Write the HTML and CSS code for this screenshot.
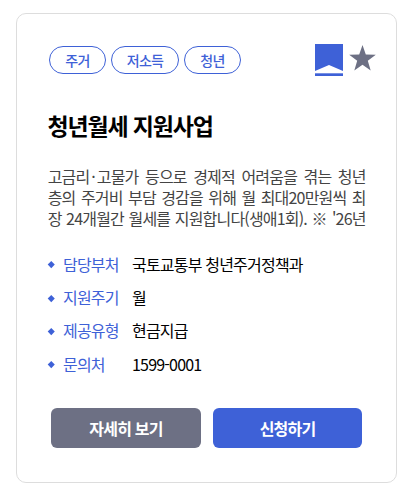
FILE: index.html
```html
<!DOCTYPE html>
<html lang="ko">
<head>
<meta charset="utf-8">
<title>청년월세 지원사업</title>
<link rel="stylesheet" href="styles.css">
</head>
<body>
<article class="card">
  <header class="card-top">
    <ul class="tags">
      <li class="tag">주거</li>
      <li class="tag tag-wide">저소득</li>
      <li class="tag">청년</li>
    </ul>
    <div class="icons">
      <svg class="bookmark" width="28" height="32" viewBox="0 0 28 32" aria-hidden="true"><path fill="#3e61d7" d="M0 0H28V27L14 21L0 27Z"/><path fill="#3e61d7" d="M0 29.3H28V32H0Z"/></svg>
      <svg class="star" width="27" height="26" viewBox="0 0 27 26" aria-hidden="true"><path fill="#6d7084" d="M13.5 0L16.8 9.5L26.8 9.7L18.8 15.8L21.7 25.4L13.5 19.7L5.3 25.4L8.2 15.8L.2 9.7L10.2 9.5Z"/></svg>
    </div>
  </header>
  <h2 class="title">청년월세 지원사업</h2>
  <p class="desc"><span class="line">고금리<span class="dot">·</span>고물가 등으로 경제적 어려움을 겪는 청년</span><span class="line">층의 주거비 부담 경감을 위해 월 최대20만원씩 최</span><span class="line">장 24개월간 월세를 지원합니다(생애1회). ※ '26년</span></p>
  <dl class="info">
    <div class="row"><dt>담당부처</dt><dd>국토교통부 청년주거정책과</dd></div>
    <div class="row"><dt>지원주기</dt><dd>월</dd></div>
    <div class="row"><dt>제공유형</dt><dd>현금지급</dd></div>
    <div class="row"><dt>문의처</dt><dd>1599-0001</dd></div>
  </dl>
  <div class="actions">
    <button class="btn detail" type="button">자세히 보기</button>
    <button class="btn apply" type="button">신청하기</button>
  </div>
</article>
</body>
</html>
```
FILE: styles.css
```css
* { box-sizing: border-box; margin: 0; padding: 0; }
body {
  padding: 13px 15px 0 16px;
  background: #fff;
  color: #000;
  font-family: "Noto Sans CJK KR", sans-serif;
  font-size: 16px;
  letter-spacing: -0.05em;
}
.card {
  height: 470px;
  padding: 30px 20px 0 31px;
  border: 1px solid #ddd;
  border-radius: 10px;
}
.card-top { display: flex; justify-content: space-between; height: 32px; }
.tags { display: flex; gap: 5px; padding: 2px 0 0 1px; list-style: none; }
.tag {
  width: 57px;
  height: 28px;
  border: 1px solid #3e61d7;
  border-radius: 14px;
  color: #3e61d7;
  font-size: 14px;
  font-weight: 500;
  letter-spacing: -0.05em;
  line-height: 26px;
  text-align: center;
}
.tag-wide { width: 68px; }
.icons { display: flex; gap: 6px; }
.star { margin-top: 1px; }
.title {
  margin: 32px 0 0 -0.5px;
  font-size: 23px;
  font-weight: 700;
  letter-spacing: -0.05em;
  line-height: 34px;
}
.desc { width: 318px; margin: 24px 0 0 -0.3px; color: #444; line-height: 21px; }
.line { display: block; text-align: justify; text-align-last: justify; white-space: nowrap; }
.dot { margin: 0 1.8px; }
.info { margin-top: 18px; }
.row { display: flex; align-items: center; height: 33.3px; line-height: 24px; }
.row::before {
  content: "";
  width: 4.5px;
  height: 4.5px;
  margin: 2px 9.5px 0 1px;
  background: #3e61d7;
  transform: rotate(45deg);
}
dt { width: 69px; color: #3e61d7; }
.actions { display: flex; gap: 12px; margin: 28px 14px 0 3px; }
.btn {
  height: 40px;
  border: 0;
  border-radius: 6px;
  color: #fff;
  font: 700 16px/40px "Noto Sans CJK KR", sans-serif;
  letter-spacing: -0.05em;
}
.detail { width: 150px; background: #6d7084; }
.apply { width: 149px; background: #3e61d7; }
```
